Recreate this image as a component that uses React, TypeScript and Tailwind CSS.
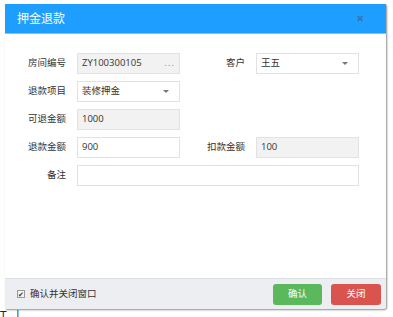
import React from "react";

const font = { fontFamily: '"Open Sans", "Noto Sans CJK SC", sans-serif' };

const Label = ({ text, w }: { text: string; w: string }) => (
  <div className={`${w} shrink-0 text-right text-[9.5px] text-[#333] pr-[11px]`}>{text}</div>
);

const Box = ({
  children,
  gray,
  w = "w-[103px]",
}: {
  children?: React.ReactNode;
  gray?: boolean;
  w?: string;
}) => (
  <div
    className={`${w} h-[21px] border border-[#e2e2e2] flex items-center px-[4px] text-[9.5px] text-[#333] ${
      gray ? "bg-[#f2f2f2]" : "bg-white"
    }`}
  >
    {children}
  </div>
);

const Caret = () => <span className="ml-auto mr-[6px] w-0 h-0 border-l-[3px] border-r-[3px] border-t-[3px] border-l-transparent border-r-transparent border-t-[#777]" />;

export default function App() {
  return (
    <div className="w-[393px] h-[317px] bg-white overflow-hidden relative" style={font}>
      <div className="pt-[4px] pl-[5px]">
        <div className="w-[381px] h-[305px] flex flex-col bg-white shadow-[1px_1px_2px_rgba(0,0,0,0.45)] rounded-br-[3px]">
          <div className="h-[29px] bg-[#1e9fff] border-b border-[#7cc4fa] flex items-center px-[12px] box-content">
            <span className="text-white text-[12px]">押金退款</span>
            <span className="ml-auto mr-[10px] text-[#3d6e9e] text-[13px] leading-none font-bold">×</span>
          </div>
          <div className="flex-1 pt-[19px] flex flex-col gap-[7px]">
            <div className="flex items-center">
              <Label text="房间编号" w="w-[72px]" />
              <Box gray>
                ZY100300105<span className="ml-auto text-[#888] tracking-[1px]">...</span>
              </Box>
              <Label text="客户" w="w-[76px]" />
              <Box>
                王五
                <Caret />
              </Box>
            </div>
            <div className="flex items-center">
              <Label text="退款项目" w="w-[72px]" />
              <Box>
                装修押金
                <Caret />
              </Box>
            </div>
            <div className="flex items-center">
              <Label text="可退金额" w="w-[72px]" />
              <Box gray>1000</Box>
            </div>
            <div className="flex items-center">
              <Label text="退款金额" w="w-[72px]" />
              <Box>900</Box>
              <Label text="扣款金额" w="w-[76px]" />
              <Box gray>100</Box>
            </div>
            <div className="flex items-center">
              <Label text="备注" w="w-[72px]" />
              <Box w="w-[282px]" />
            </div>
          </div>
          <div className="h-[31px] bg-[#eceef2] border-t border-[#dcdfe4] flex items-center pl-[12px] pr-[5px] rounded-br-[3px]">
            <span className="w-[8px] h-[8px] border border-[#999] bg-[#f4f4f4] flex items-center justify-center text-[7px] leading-none text-[#333]">✔</span>
            <span className="ml-[5px] text-[9.5px] text-[#333]">确认并关闭窗口</span>
            <button className="ml-auto w-[49px] h-[21px] rounded-[3px] bg-[#5cb85c] text-white text-[9.5px]">确认</button>
            <button className="ml-[9px] w-[50px] h-[21px] rounded-[3px] bg-[#d9534f] text-white text-[9.5px]">关闭</button>
          </div>
        </div>
      </div>
      <div className="absolute left-0 top-[310px] flex items-start gap-[8px] text-[12px] leading-none text-[#222]">
        <span>T</span>
        <span>|</span>
      </div>
    </div>
  );
}
